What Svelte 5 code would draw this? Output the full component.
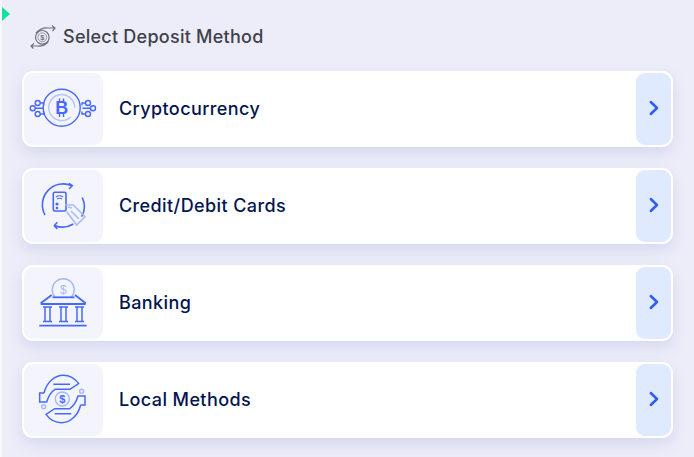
<script>
    const methods = [
        { id: "crypto", label: "Cryptocurrency" },
        { id: "cards", label: "Credit/Debit Cards" },
        { id: "bank", label: "Banking" },
        { id: "local", label: "Local Methods" },
    ];
</script>

<div class="page">
    <span class="marker"></span>
    <header class="title">
        <svg class="title-icon" width="28" height="26" viewBox="0 0 28 26" fill="none" stroke="#6f727d" stroke-width="1.2">
            <circle cx="14.3" cy="14.3" r="6.8" />
            <circle cx="14.3" cy="14.3" r="4.4" stroke-width="0.7" />
            <path d="M8 10 Q13 4.5 20 5 L27 5 M24 2.5 L27 5 L24.5 8" />
            <path d="M20.5 18.5 Q15.5 24 8.5 23 L3 23 M6 20.5 L3 23 L5.5 25.5" />
            <text x="14.3" y="17" text-anchor="middle" class="glyph" font-size="7.5" font-weight="700" fill="#6f727d" stroke="none">$</text>
        </svg>
        <h1>Select Deposit Method</h1>
    </header>

    <div class="list">
        {#each methods as m}
            <button class="card">
                <span class="tile">
                    <svg width="79" height="72" viewBox="0 0 79 72" fill="none" stroke="#4668ff" stroke-width="1.4">
                        {#if m.id === "crypto"}
                            <circle cx="37.7" cy="34.7" r="18.5" />
                            <path d="M46.7 44 A13 13 0 1 1 50.7 34.7" stroke="#b4c3fb" />
                            <text x="37.7" y="41" text-anchor="middle" class="glyph" font-size="18" font-weight="700" fill="#4668ff" stroke="none">B</text>
                            <path d="M35.5 25.5 v3 M39.5 25.5 v3 M35.5 41 v3 M39.5 41 v3" />
                            <circle cx="13.7" cy="30" r="2.5" />
                            <circle cx="8.7" cy="35.3" r="2.5" />
                            <circle cx="13.7" cy="41" r="2.5" />
                            <path d="M16.2 30 h3.5 v2.5 M11.2 35.3 h8 M16.2 41 h3.5 v-2.5" />
                            <circle cx="64" cy="30" r="2.5" />
                            <circle cx="69" cy="35.3" r="2.5" />
                            <circle cx="64" cy="41" r="2.5" />
                            <path d="M61.5 30 h-3.5 v2.5 M66.5 35.3 h-8 M61.5 41 h-3.5 v-2.5" />
                        {:else if m.id === "cards"}
                            <path d="M21 45 A21 21 0 0 1 48 15.7 M45 13.3 L48.3 15.7 L45 19" stroke-width="1.6" />
                            <path d="M58.3 27.7 A21 21 0 0 1 57.7 46.7" stroke-width="1.6" />
                            <path d="M49.3 54 A21 21 0 0 1 31 55.7 M33.3 52.3 L30.3 55.7 L33.3 59" stroke-width="1.6" />
                            <rect x="29.3" y="22.3" width="12.7" height="18.7" rx="1.5" stroke-width="1.6" />
                            <path d="M32 27 q3.5 -2.5 7 0 M33 29 q2.5 -1.5 5 0" stroke-width="1.1" />
                            <circle cx="33" cy="34" r="1.6" fill="#4668ff" stroke="none" />
                            <circle cx="33" cy="38" r="1.3" fill="#4668ff" stroke="none" />
                            <path d="M41 35 L49.3 35 L61 46.7 L52.7 55 L42.7 41.7 M47 41 L55 49 M44 37 L48 38" stroke="#a8b9fa" stroke-width="1.5" />
                        {:else if m.id === "bank"}
                            <path d="M31 30 A11 11 0 1 1 47.5 30" stroke="#a8b9fa" />
                            <text x="39.3" y="27" text-anchor="middle" class="glyph" font-size="12" fill="#a8b9fa" stroke="none">$</text>
                            <path d="M28.5 30.3 H50.5" stroke-width="1.8" />
                            <path d="M16.7 36.3 L27.7 28 M61.7 36.3 L51 28" stroke-width="1.8" />
                            <path d="M16.7 37 H61.7" stroke-width="1.8" />
                            <path d="M19 40 h9 M19 54.5 h9 M35 40 h9 M35 54.5 h9 M51 40 h9 M51 54.5 h9" />
                            <path d="M21 40 v14.5 M26 40 v14.5 M37 40 v14.5 M42 40 v14.5 M53 40 v14.5 M58 40 v14.5" stroke-width="1.5" />
                            <path d="M15.3 58.7 H62.7" stroke-width="1.8" />
                        {:else}
                            <g transform="translate(-4 -7) scale(0.3333)" stroke-width="4.5">
                                <circle cx="127" cy="126" r="21" stroke="#a8b9fa" />
                                <path d="M72 108 C80 75 105 55 130 55 C150 55 165 65 176 80 L150 97 L105 97 C92 105 84 122 80 135 L59 135 L59 108 L72 108 M100 82 L150 82" />
                                <path d="M72 108 C80 75 105 55 130 55 C150 55 165 65 176 80 L150 97 L105 97 C92 105 84 122 80 135 L59 135 L59 108 L72 108 M100 82 L150 82" transform="rotate(180 127 126)" />
                                <circle cx="185" cy="103" r="6" stroke="#a8b9fa" />
                                <circle cx="71" cy="149" r="6" stroke="#a8b9fa" />
                            </g>
                            <text x="38.3" y="39" text-anchor="middle" class="glyph" font-size="11" font-weight="700" fill="#4668ff" stroke="none">$</text>
                        {/if}
                    </svg>
                </span>
                <span class="label">{m.label}</span>
                <span class="go">
                    <svg width="10" height="16" viewBox="0 0 10 16" fill="none" stroke="#2f5bfa" stroke-width="2.5" stroke-linecap="round" stroke-linejoin="round">
                        <path d="M1.8 2 L8 8 L1.8 14" />
                    </svg>
                </span>
            </button>
        {/each}
    </div>
</div>

<style>
    :global(body) {
        background: #f6f6fb;
    }

    .page {
        position: relative;
        height: 457px;
        box-sizing: border-box;
        margin-left: 2px;
        padding: 21px 21px 0 20px;
        background: #ecedf8;
        font-family: "Inter", "Open Sans", sans-serif;
        overflow: hidden;
    }

    .marker {
        position: absolute;
        left: 0;
        top: 7px;
        border-left: 8px solid #10e0a0;
        border-top: 7.5px solid transparent;
        border-bottom: 7.5px solid transparent;
    }

    .title {
        display: flex;
        align-items: center;
        gap: 7px;
        height: 30px;
        padding-left: 6px;
        margin-bottom: 20px;
    }

    h1 {
        margin: 0;
        font-size: 18px;
        font-weight: 500;
        letter-spacing: 0.25px;
        color: #3f414b;
    }

    .list {
        display: flex;
        flex-direction: column;
        gap: 21px;
    }

    .card {
        display: flex;
        align-items: stretch;
        height: 76px;
        padding: 2px;
        border: none;
        border-radius: 11px;
        background: #fff;
        box-shadow: 0 6px 14px rgba(100, 110, 200, 0.16);
        font: inherit;
        text-align: left;
    }

    .tile {
        display: flex;
        width: 79px;
        border-radius: 9px;
        background: #f4f5fc;
    }

    .label {
        flex: 1;
        align-self: center;
        padding: 0 0 2px 16px;
        font-size: 18px;
        font-weight: 500;
        letter-spacing: 0.4px;
        color: #02154e;
    }

    .go {
        display: flex;
        align-items: center;
        justify-content: center;
        width: 35px;
        border-radius: 9px;
        background: #e0eaff;
    }

    .go svg {
        margin-bottom: 2px;
    }

    .glyph {
        font-family: "Liberation Sans", sans-serif;
    }
</style>
